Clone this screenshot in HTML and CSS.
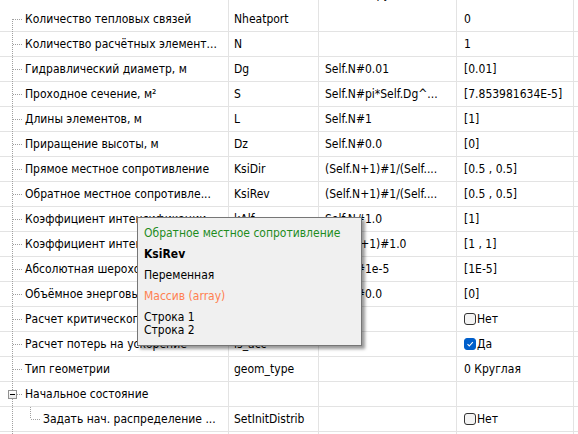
FILE: index.html
```html
<!DOCTYPE html>
<html lang="en">
<head>
    <meta charset="UTF-8">
    <title>Свойства</title>
    <link rel="stylesheet" href="styles.css">
</head>
<body>
    <div class="grid">
        <div class="row cut">
            <div class="cell name"></div>
            <div class="cell"></div>
            <div class="cell"><span class="cut-text">Nheat(py)</span></div>
            <div class="cell"></div>
        </div>
        <div class="row">
            <div class="cell name">Количество тепловых связей</div>
            <div class="cell">Nheatport</div>
            <div class="cell"></div>
            <div class="cell val">0</div>
        </div>
        <div class="row">
            <div class="cell name">Количество расчётных элемент...</div>
            <div class="cell">N</div>
            <div class="cell"></div>
            <div class="cell val">1</div>
        </div>
        <div class="row">
            <div class="cell name">Гидравлический диаметр, м</div>
            <div class="cell">Dg</div>
            <div class="cell">Self.N#0.01</div>
            <div class="cell val">[0.01]</div>
        </div>
        <div class="row">
            <div class="cell name">Проходное сечение, м²</div>
            <div class="cell">S</div>
            <div class="cell">Self.N#pi*Self.Dg^...</div>
            <div class="cell val">[7.853981634E-5]</div>
        </div>
        <div class="row">
            <div class="cell name">Длины элементов, м</div>
            <div class="cell">L</div>
            <div class="cell">Self.N#1</div>
            <div class="cell val">[1]</div>
        </div>
        <div class="row">
            <div class="cell name">Приращение высоты, м</div>
            <div class="cell">Dz</div>
            <div class="cell">Self.N#0.0</div>
            <div class="cell val">[0]</div>
        </div>
        <div class="row">
            <div class="cell name">Прямое местное сопротивление</div>
            <div class="cell">KsiDir</div>
            <div class="cell">(Self.N+1)#1/(Self....</div>
            <div class="cell val">[0.5 , 0.5]</div>
        </div>
        <div class="row">
            <div class="cell name">Обратное местное сопротивле...</div>
            <div class="cell">KsiRev</div>
            <div class="cell">(Self.N+1)#1/(Self....</div>
            <div class="cell val">[0.5 , 0.5]</div>
        </div>
        <div class="row">
            <div class="cell name">Коэффициент интенсификации</div>
            <div class="cell">kAlf</div>
            <div class="cell">Self.N#1.0</div>
            <div class="cell val">[1]</div>
        </div>
        <div class="row">
            <div class="cell name">Коэффициент интенсификации</div>
            <div class="cell">kKsi</div>
            <div class="cell">(Self.N+1)#1.0</div>
            <div class="cell val">[1 , 1]</div>
        </div>
        <div class="row">
            <div class="cell name">Абсолютная шероховатость, м</div>
            <div class="cell">Rough</div>
            <div class="cell">Self.N#1e-5</div>
            <div class="cell val">[1E-5]</div>
        </div>
        <div class="row">
            <div class="cell name">Объёмное энерговыделение</div>
            <div class="cell">Qv</div>
            <div class="cell">Self.N#0.0</div>
            <div class="cell val">[0]</div>
        </div>
        <div class="row">
            <div class="cell name">Расчет критического расхода</div>
            <div class="cell">is_crit</div>
            <div class="cell"></div>
            <div class="cell val"><span class="check"></span>Нет</div>
        </div>
        <div class="row">
            <div class="cell name">Расчет потерь на ускорение</div>
            <div class="cell">is_acc</div>
            <div class="cell"></div>
            <div class="cell val"><span class="check on"><svg width="10" height="10" viewBox="0 0 10 10"><path d="M2.5 5.2 L4.3 7 L7.8 3.2" fill="none" stroke="#fff" stroke-width="1.1"/></svg></span>Да</div>
        </div>
        <div class="row">
            <div class="cell name">Тип геометрии</div>
            <div class="cell">geom_type</div>
            <div class="cell"></div>
            <div class="cell val">0 Круглая</div>
        </div>
        <div class="row">
            <div class="cell name group"><span class="expander"></span>Начальное состояние</div>
            <div class="cell"></div>
            <div class="cell"></div>
            <div class="cell val"></div>
        </div>
        <div class="row">
            <div class="cell name child">Задать нач. распределение ...</div>
            <div class="cell">SetInitDistrib</div>
            <div class="cell"></div>
            <div class="cell val"><span class="check"></span>Нет</div>
        </div>
        <div class="row">
            <div class="cell name"></div>
            <div class="cell"></div>
            <div class="cell"></div>
            <div class="cell"></div>
        </div>
    </div>

    <div class="tooltip">
        <div class="tip-line tip-title">Обратное местное сопротивление</div>
        <div class="tip-line tip-name">KsiRev</div>
        <div class="tip-line">Переменная</div>
        <div class="tip-line tip-type">Массив (array)</div>
        <div class="tip-rows">
            Строка 1<br>
            Строка 2
        </div>
    </div>
</body>
</html>
```

FILE: styles.css
```css
body {
    margin: 0;
    padding: 0;
    background-color: #fff;
    font-family: "DejaVu Sans Condensed", "DejaVu Sans", sans-serif;
    font-stretch: condensed;
    font-size: 12px;
    color: #000;
    overflow: hidden;
}
.grid {
    position: relative;
    width: 578px;
    height: 434px;
    overflow: hidden;
}
/* main tree line */
.grid::before {
    content: "";
    position: absolute;
    left: 12px;
    top: 19px;
    bottom: 0;
    width: 1px;
    background: repeating-linear-gradient(to bottom, #a0a0a0 0 1px, transparent 1px 2px);
}
.row {
    display: grid;
    grid-template-columns: 229px 90px 138px 117px;
    height: 24px;
    border-bottom: 1px solid #e3e3e3;
}
.row.cut {
    height: 7px;
    border-bottom: none;
}
.cell {
    position: relative;
    border-right: 1px solid #e3e3e3;
    padding-left: 6px;
    line-height: 25px;
    white-space: nowrap;
    overflow: hidden;
}
.cell.val {
    padding-left: 7px;
}
.cell.name {
    padding-left: 25px;
}
.row .cell:nth-child(2) {
    padding-left: 5px;
}
.cut .cell {
    line-height: 7px;
}
.cut-text {
    position: relative;
    top: -9px;
    padding-left: 15px;
}
.cell.name::before {
    content: "";
    position: absolute;
    left: 13px;
    top: 12px;
    width: 9px;
    height: 1px;
    background: repeating-linear-gradient(to right, #a0a0a0 0 1px, transparent 1px 2px);
}
.cut .cell.name::before,
.row:last-child .cell.name::before {
    display: none;
}
.cell.group::before {
    left: 17px;
    width: 5px;
}
.expander {
    position: absolute;
    left: 8px;
    top: 8px;
    width: 7px;
    height: 7px;
    border: 1px solid #919191;
    background: linear-gradient(#fff, #e8e8e8);
    z-index: 1;
}
.expander::after {
    content: "";
    position: absolute;
    left: 1px;
    top: 3px;
    width: 5px;
    height: 1px;
    background: #000;
}
.cell.child {
    padding-left: 43px;
}
.cell.child::before {
    left: 31px;
    width: 9px;
}
.cell.child::after {
    content: "";
    position: absolute;
    left: 30px;
    top: 0;
    width: 1px;
    height: 12px;
    background: repeating-linear-gradient(to bottom, #a0a0a0 0 1px, transparent 1px 2px);
}
.check {
    display: inline-block;
    box-sizing: border-box;
    width: 12px;
    height: 12px;
    border: 1px solid #333;
    border-radius: 3px;
    background-color: #f3f3f3;
    vertical-align: -2px;
    margin-right: 1px;
}
.check svg {
    display: block;
    margin: 0;
}
.check.on {
    background-color: #005fcb;
    border-color: #005fcb;
}
.tooltip {
    position: absolute;
    left: 137px;
    top: 217px;
    width: 217px;
    height: 122px;
    padding: 5px 0 0 6px;
    border: 1px solid #767676;
    background-color: #f0f0f0;
    box-shadow: 3px 3px 3px rgba(0, 0, 0, 0.4);
    white-space: nowrap;
}
.tip-line {
    line-height: 21px;
}
.tip-title {
    color: #1e8c1e;
}
.tip-name {
    font-weight: bold;
}
.tip-type {
    color: #ff8050;
}
.tip-rows {
    margin-top: 4px;
    line-height: 13px;
}
```
